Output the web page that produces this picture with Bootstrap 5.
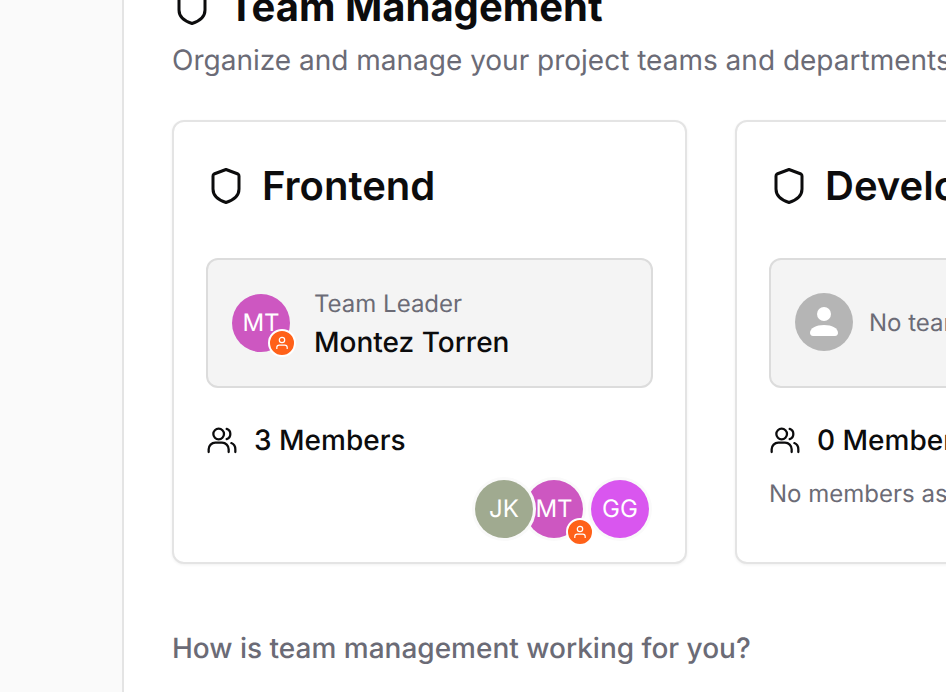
<!DOCTYPE html>
<html lang="en">
  <head>
    <meta charset="UTF-8" />
    <meta name="viewport" content="width=device-width, initial-scale=1.0" />
    <title>Team Management</title>
    <link
      href="https://cdn.jsdelivr.net/npm/bootstrap@5.3.0/dist/css/bootstrap.min.css"
      rel="stylesheet"
    />
    <style>
      html,
      body {
        height: 100%;
        overflow: hidden;
      }
      body {
        font-family: Inter, "Liberation Sans", sans-serif;
        color: #0c0c0d;
        background-color: #fff;
        text-rendering: geometricPrecision;
      }
      .side-rail {
        width: 124px;
        background-color: #fafafa;
        border-right: 2px solid #e4e4e4;
      }
      .main-pane {
        width: 822px;
        padding: 0 0 0 48px;
        margin-top: -15px;
      }
      .page-title {
        font-size: 40px;
        line-height: 44px;
        font-weight: 700;
        gap: 18px;
        margin: 0;
        padding-left: 2px;
      }
      .page-sub {
        font-size: 28px;
        line-height: 36px;
        color: #6b6b76;
        margin: 13px 0 42px;
        white-space: nowrap;
      }
      .card-row {
        gap: 48px;
        width: 1078px;
      }
      .team-box {
        width: 515px;
        height: 444px;
        flex: none;
        border: 2px solid #e4e4e4;
        border-radius: 12px;
        padding: 32px;
        background-color: #fff;
        box-shadow: 0 1px 3px rgba(0, 0, 0, 0.06);
      }
      .team-head {
        gap: 18px;
        height: 64px;
        font-size: 40px;
        font-weight: 600;
        line-height: 44px;
        margin: 0 0 40px;
        white-space: nowrap;
      }
      .team-head svg {
        margin-left: 2px;
      }
      .leader-box {
        height: 130px;
        border: 2px solid #dcdcdc;
        border-radius: 12px;
        background-color: #f4f4f4;
        padding: 0 24px;
        gap: 24px;
        margin-bottom: 34px;
      }
      .face {
        position: relative;
        width: 58px;
        height: 58px;
        flex: none;
        border-radius: 50%;
        color: #fff;
        font-size: 24px;
      }
      .face-pink {
        background-color: #cd57c1;
      }
      .face-sage {
        background-color: #a0aa90;
      }
      .face-violet {
        background-color: #d956ef;
      }
      .face-none {
        background-color: #b5b5b5;
        margin-bottom: 2px;
      }
      .crown {
        position: absolute;
        right: -6px;
        bottom: -5px;
        width: 28px;
        height: 28px;
        border-radius: 50%;
        background-color: #ff6119;
        border: 2px solid #fff;
      }
      .leader-text {
        padding-top: 1px;
      }
      .leader-label {
        font-size: 24px;
        line-height: 32px;
        color: #6b6b76;
      }
      .leader-name {
        font-size: 28px;
        line-height: 36px;
        font-weight: 500;
        margin-top: 4px;
      }
      .none-label {
        font-size: 24px;
        color: #6b6b76;
        white-space: nowrap;
        margin-left: -8px;
      }
      .member-line {
        gap: 16px;
        font-size: 28px;
        line-height: 36px;
        font-weight: 500;
        white-space: nowrap;
      }
      .member-stack {
        margin-top: 22px;
        padding-right: 4px;
      }
      .member-stack .face {
        box-shadow: 0 0 0 3px #fafafa;
      }
      .member-stack .face + .face {
        margin-left: 8px;
      }
      .member-stack .face-sage {
        z-index: 1;
      }
      .member-stack .face-pink {
        margin-left: -8px !important;
      }
      .member-stack .crown {
        right: -11px;
        bottom: -8px;
      }
      .no-members {
        font-size: 24px;
        line-height: 32px;
        color: #6b6b76;
        margin-top: 20px;
        white-space: nowrap;
      }
      .feedback-line {
        font-size: 28px;
        line-height: 36px;
        font-weight: 500;
        color: #6b6b76;
        margin-top: 66px;
      }
    </style>
  </head>
  <body>
    <div class="d-flex h-100">
      <div class="side-rail flex-shrink-0"></div>
      <div class="main-pane">
        <h1 class="page-title d-flex align-items-center">
          <svg width="36" height="40" viewBox="0 0 36 40" fill="none" stroke="#0c0c0d" stroke-width="3" stroke-linejoin="round">
            <path d="M18 3.500 30 8Q31 8.500 31 10V23C31 30 26 34 18 36.500 10 34 5 30 5 23V10Q5 8.500 6 8Z" />
          </svg>
          Team Management
        </h1>
        <p class="page-sub">Organize and manage your project teams and departments</p>
        <div class="card-row d-flex">
          <div class="team-box">
            <h2 class="team-head d-flex align-items-center">
              <svg width="36" height="40" viewBox="0 0 36 40" fill="none" stroke="#0c0c0d" stroke-width="3" stroke-linejoin="round">
                <path d="M18 3.500 30 8Q31 8.500 31 10V23C31 30 26 34 18 36.500 10 34 5 30 5 23V10Q5 8.500 6 8Z" />
              </svg>
              Frontend
            </h2>
            <div class="leader-box d-flex align-items-center">
              <div class="face face-pink d-flex align-items-center justify-content-center">
                MT
                <span class="crown d-flex align-items-center justify-content-center">
                  <svg width="16" height="16" viewBox="0 0 16 16" fill="none" stroke="#fff" stroke-width="1.200">
                    <circle cx="8" cy="5" r="2.700" />
                    <path d="M2.800 14v-1.500c0-1.400 1-2.300 2.400-2.300h5.600c1.400 0 2.400.9 2.400 2.300V14" />
                  </svg>
                </span>
              </div>
              <div class="leader-text">
                <div class="leader-label">Team Leader</div>
                <div class="leader-name">Montez Torren</div>
              </div>
            </div>
            <div class="member-line d-flex align-items-center">
              <svg width="32" height="32" viewBox="0 0 24 24" fill="none" stroke="#0c0c0d" stroke-width="1.700" stroke-linecap="round">
                <circle cx="9.500" cy="7.500" r="4" />
                <path d="M2 21v-2c0-2.800 2.200-5 5-5h5c2.800 0 5 2.200 5 5v2" />
                <path d="M15.500 3.700a4 4 0 0 1 0 7.600" />
                <path d="M19 14.300c1.800.7 3 2.500 3 4.700v2" />
              </svg>
              3 Members
            </div>
            <div class="member-stack d-flex justify-content-end">
              <div class="face face-sage d-flex align-items-center justify-content-center">JK</div>
              <div class="face face-pink d-flex align-items-center justify-content-center">
                MT
                <span class="crown d-flex align-items-center justify-content-center">
                  <svg width="16" height="16" viewBox="0 0 16 16" fill="none" stroke="#fff" stroke-width="1.200">
                    <circle cx="8" cy="5" r="2.700" />
                    <path d="M2.800 14v-1.500c0-1.400 1-2.300 2.400-2.300h5.600c1.400 0 2.400.9 2.400 2.300V14" />
                  </svg>
                </span>
              </div>
              <div class="face face-violet d-flex align-items-center justify-content-center">GG</div>
            </div>
          </div>
          <div class="team-box">
            <h2 class="team-head d-flex align-items-center">
              <svg width="36" height="40" viewBox="0 0 36 40" fill="none" stroke="#0c0c0d" stroke-width="3" stroke-linejoin="round">
                <path d="M18 3.500 30 8Q31 8.500 31 10V23C31 30 26 34 18 36.500 10 34 5 30 5 23V10Q5 8.500 6 8Z" />
              </svg>
              Development
            </h2>
            <div class="leader-box d-flex align-items-center">
              <div class="face face-none d-flex align-items-center justify-content-center">
                <svg width="36" height="36" viewBox="0 0 36 36" fill="#fff">
                  <circle cx="18" cy="10" r="7" />
                  <path d="M4 29c0-5 6-8 14-8s14 3 14 8c0 1.500-1 3-3 3H7c-2 0-3-1.500-3-3Z" />
                </svg>
              </div>
              <div class="none-label">No team leader assigned</div>
            </div>
            <div class="member-line d-flex align-items-center">
              <svg width="32" height="32" viewBox="0 0 24 24" fill="none" stroke="#0c0c0d" stroke-width="1.700" stroke-linecap="round">
                <circle cx="9.500" cy="7.500" r="4" />
                <path d="M2 21v-2c0-2.800 2.200-5 5-5h5c2.800 0 5 2.200 5 5v2" />
                <path d="M15.500 3.700a4 4 0 0 1 0 7.600" />
                <path d="M19 14.300c1.800.7 3 2.500 3 4.700v2" />
              </svg>
              0 Members
            </div>
            <div class="no-members">No members assigned yet</div>
          </div>
        </div>
        <p class="feedback-line">How is team management working for you?</p>
      </div>
    </div>
    <script src="https://cdn.jsdelivr.net/npm/bootstrap@5.3.0/dist/js/bootstrap.bundle.min.js"></script>
  </body>
</html>
